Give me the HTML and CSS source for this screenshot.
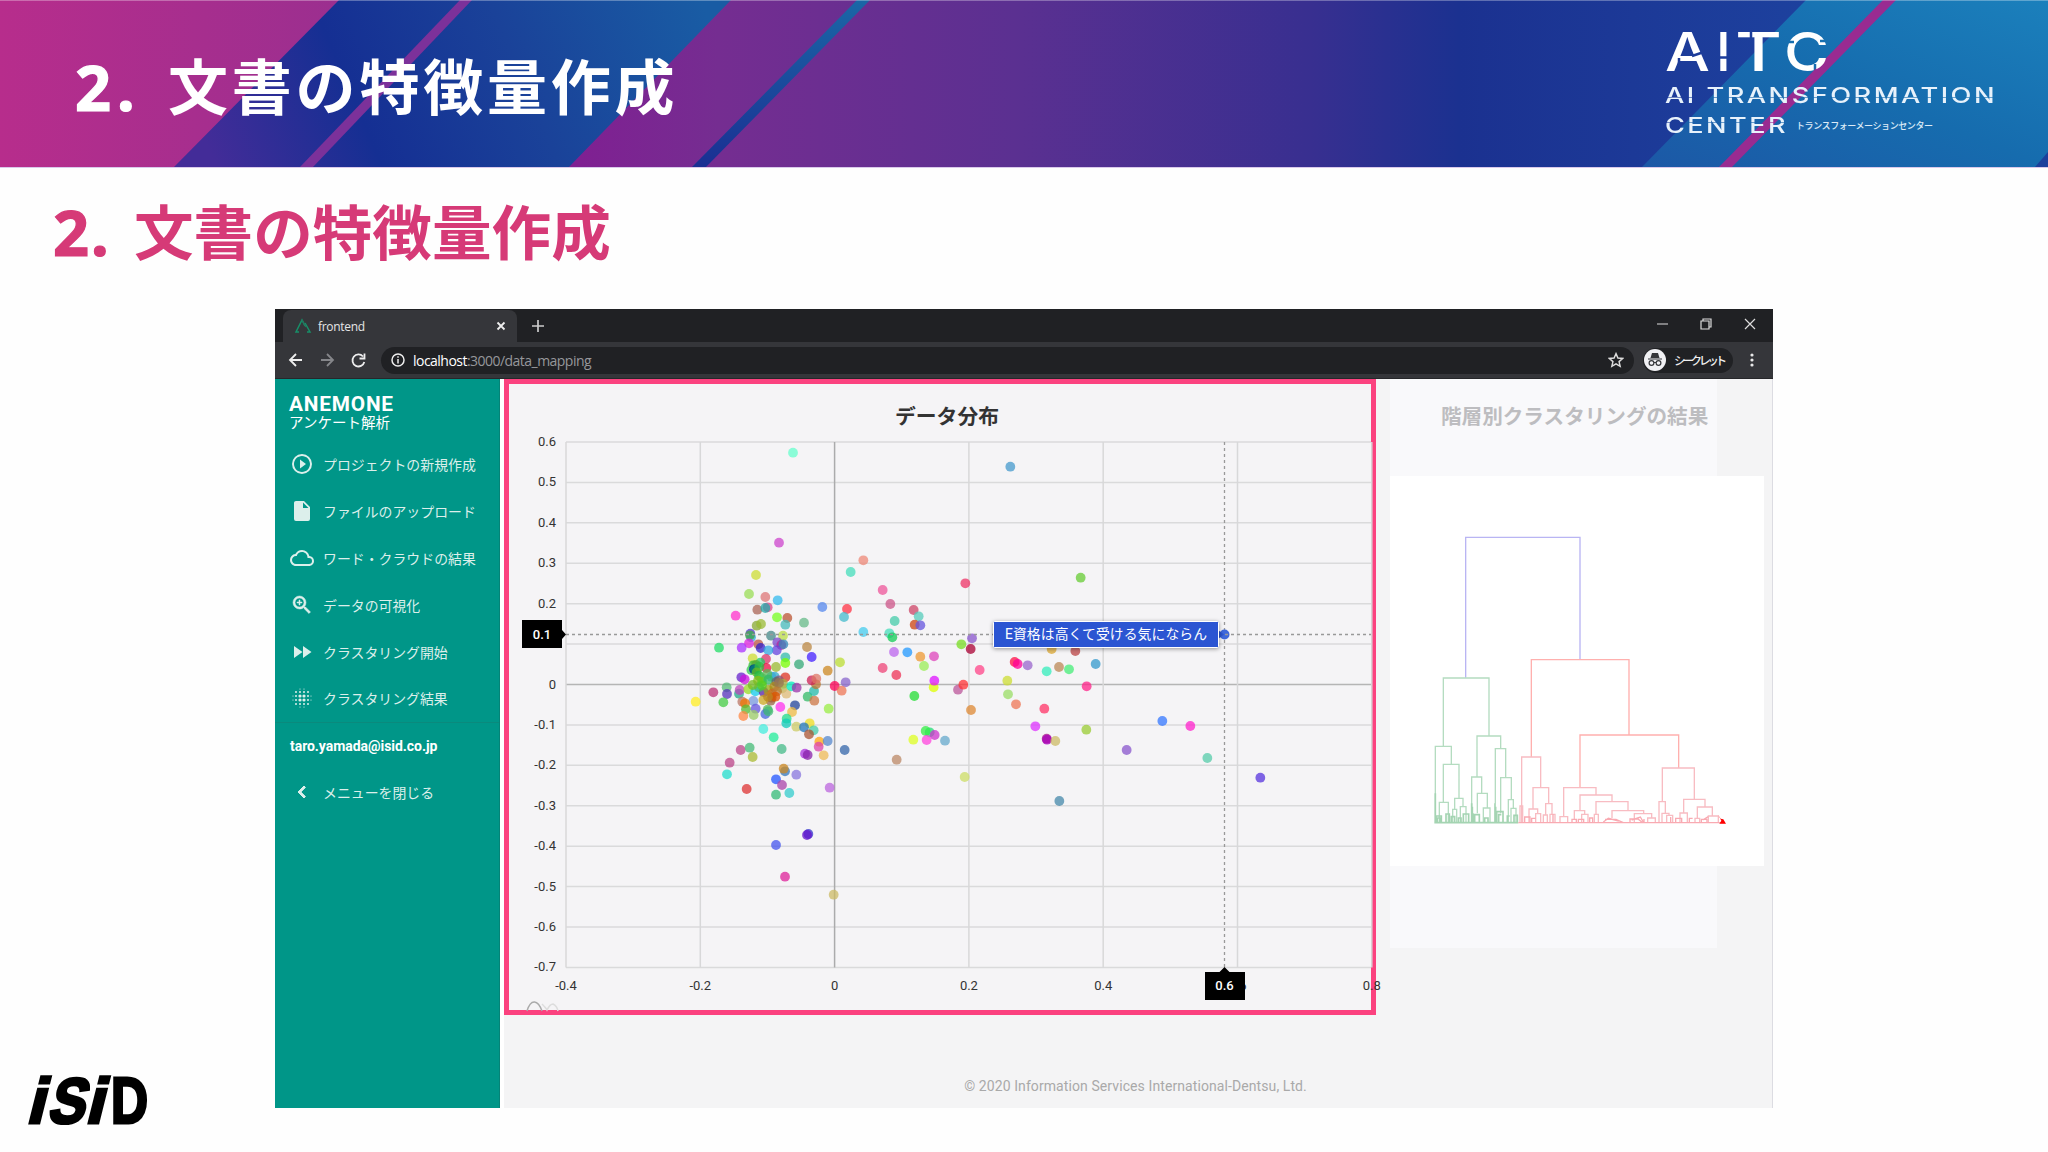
FILE: index.html
```html
<!DOCTYPE html>
<html lang="ja">
<head>
<meta charset="utf-8">
<title>2. 文書の特徴量作成</title>
<link rel="stylesheet" href="styles.css">
</head>
<body>
<header class="banner">
  <svg class="banner-art" viewBox="0 0 2048 167" preserveAspectRatio="none">
    <defs>
      <linearGradient id="pink"><stop offset="0" stop-color="#b72d8c"/><stop offset="1" stop-color="#962f90"/></linearGradient>
      <linearGradient id="blue" gradientUnits="userSpaceOnUse" x1="230" y1="200" x2="700" y2="0"><stop offset="0" stop-color="#432c98"/><stop offset=".3" stop-color="#152f93"/><stop offset=".62" stop-color="#1a4299"/><stop offset="1" stop-color="#195ca4"/></linearGradient>
      <linearGradient id="violet" gradientUnits="userSpaceOnUse" x1="569" y1="0" x2="1806" y2="0"><stop offset="0" stop-color="#801f92"/><stop offset=".12" stop-color="#752d91"/><stop offset=".36" stop-color="#5b3091"/><stop offset=".6" stop-color="#382f90"/><stop offset=".72" stop-color="#1b3190"/><stop offset="1" stop-color="#1d419e"/></linearGradient>
      <linearGradient id="sky" x1="0" y1="1" x2="1" y2="0"><stop offset="0" stop-color="#1c58a6"/><stop offset=".5" stop-color="#166cae"/><stop offset="1" stop-color="#1b80bc"/></linearGradient>
      <linearGradient id="teal" x1="0" y1="1" x2="0" y2="0"><stop offset="0" stop-color="#1a2f93"/><stop offset="1" stop-color="#1a67a6"/></linearGradient>
    </defs>
    <rect width="400" height="167" fill="url(#pink)"/>
    <path d="M339 0H740L580 167H174Z" fill="url(#blue)"/>
    <path d="M460 0H472L313 167H300Z" fill="#7c319a"/>
    <path d="M731 0H1810V167H569Z" fill="url(#violet)"/>
    <path d="M857 0H870L706 167H692Z" fill="url(#teal)"/>
    <path d="M1806 0H2048V167H1642Z" fill="url(#sky)"/>
    <path d="M1883 0H1896L1732 167H1719Z" fill="#992b91"/>
    <path d="M2048 152V167H2035Z" fill="#1c409c"/>
    <path d="M0 .5H2048" stroke="#fff" stroke-opacity=".3"/>
  </svg>
  <h1><span class="num">2.</span><span>文書の特徴量作成</span></h1>
  <svg class="brand" width="350" height="120" viewBox="1660 25 350 120">
    <defs>
      <mask id="cuts" maskUnits="userSpaceOnUse" x="1650" y="20" width="370" height="70"><rect x="1650" y="20" width="370" height="70" fill="#fff"/>
        <path d="M1692 56L1704 52M1679 66V58M1718 57.500H1730M1751 39V30M1784 42H1794M1820 41H1830M1815 73V64" stroke="#000" stroke-width="2.500"/></mask>
      <mask id="fineCuts" maskUnits="userSpaceOnUse" x="1650" y="80" width="370" height="70"><rect x="1650" y="80" width="370" height="70" fill="#fff"/>
        <path d="M1660 97.500H2000M1660 122.500H1790" stroke="#000" stroke-width="1" stroke-opacity=".6"/></mask>
    </defs>
    <g class="brand-big" mask="url(#cuts)">
      <text x="1665" y="71" textLength="45" lengthAdjust="spacingAndGlyphs">A</text>
      <text x="1716" y="71">I</text>
      <text x="1735" y="71" textLength="47" lengthAdjust="spacingAndGlyphs">T</text>
      <text x="1784" y="71" textLength="45" lengthAdjust="spacingAndGlyphs">C</text>
    </g>
    <g mask="url(#fineCuts)">
      <text class="brand-sub" x="1665" y="103" textLength="332" lengthAdjust="spacingAndGlyphs">AI TRANSFORMATION</text>
      <text class="brand-sub" x="1665" y="133" textLength="123" lengthAdjust="spacingAndGlyphs">CENTER</text>
    </g>
    <text class="brand-kana" x="1796" y="129" textLength="137">トランスフォーメーションセンター</text>
  </svg>
</header>
<h2><span class="num">2.</span><span>文書の特徴量作成</span></h2>

<main class="window">
  <div class="tabs">
    <div class="tab">
      <svg width="18" height="16" viewBox="0 0 18 16" fill="none" stroke-width="1.500"><path d="M5 14H2L8 2L11 8" stroke="#178f68"/><path d="M11 5L16 14H13" stroke="#178f68"/><path d="M8 2L12 9" stroke="#24755e"/></svg>
      <span>frontend</span>
      <svg class="tab-close" width="10" height="10" viewBox="0 0 10 10" stroke="#eee" stroke-width="1.800"><path d="M1.500 1.500l7 7M8.500 1.500l-7 7"/></svg>
    </div>
    <svg class="plus" width="14" height="14" viewBox="0 0 14 14" stroke="#ccc" stroke-width="1.700"><path d="M7 1v12M1 7h12"/></svg>
    <svg class="controls" width="110" height="20" viewBox="0 0 110 20" fill="none" stroke="#ddd" stroke-width="1.200"><path d="M5 10H16M93 5l10 10M103 5l-10 10"/><path d="M49 7h8v8h-8zM51 7V5h8v8h-2"/></svg>
  </div>
  <div class="toolbar">
    <svg width="92" height="24" viewBox="0 0 92 24" fill="none" stroke-width="1.800"><path d="M22 12H10M16 6l-6 6l6 6" stroke="#eee"/><path d="M41 12h12M47 6l6 6l-6 6" stroke="#85868a"/><path d="M83 8.500A6 6 0 1 0 84.300 14M84.500 5.500V10.500H79.500" stroke="#eee"/></svg>
    <div class="omnibox">
      <svg width="16" height="16" viewBox="0 0 16 16" fill="none" stroke="#eee" stroke-width="1.500"><circle cx="8" cy="8" r="6"/><path d="M8 7v4.500M8 4.300v1.500"/></svg>
      <span class="url"><b>localhost</b>:3000/data_mapping</span>
      <svg class="star" width="16" height="16" viewBox="0 0 24 24" fill="none" stroke="#ddd" stroke-width="2.200"><path d="M12 2.500l2.900 6.500 7 .7-5.300 4.700 1.600 7L12 17.700 5.800 21.400l1.600-7L2.100 9.700l7-.7z"/></svg>
    </div>
    <div class="incognito">
      <svg width="22" height="22" viewBox="0 0 22 22"><circle cx="11" cy="11" r="11" fill="#f1f1f4"/><path d="M4 9.500h14v1H4zM6.500 9l1.500-5h6l1.500 5z" fill="#35363a"/><g fill="none" stroke="#35363a" stroke-width="1.200"><circle cx="7.500" cy="14" r="2.400"/><circle cx="14.500" cy="14" r="2.400"/><path d="M10 13.500h2"/></g></svg>
      <span>シークレット</span>
    </div>
    <svg class="dots" width="4" height="16" viewBox="0 0 4 16" fill="#e8e8e8"><circle cx="2" cy="3" r="1.600"/><circle cx="2" cy="8" r="1.600"/><circle cx="2" cy="13" r="1.600"/></svg>
  </div>
  <div class="page">
    <nav class="sidebar">
      <div class="app"><b>ANEMONE</b><span>アンケート解析</span></div>
      <ul>
        <li><svg viewBox="0 0 24 24"><path d="M12 20c-4.410 0-8-3.590-8-8s3.590-8 8-8 8 3.590 8 8-3.590 8-8 8m0-18A10 10 0 1 0 12 22 10 10 0 0 0 12 2m-2 14.500l6-4.500-6-4.500z"/></svg>プロジェクトの新規作成</li>
        <li><svg viewBox="0 0 24 24"><path d="M13 9V3.500L18.500 9M6 2c-1.110 0-2 .89-2 2v16a2 2 0 0 0 2 2h12a2 2 0 0 0 2-2V8l-6-6z"/></svg>ファイルのアップロード</li>
        <li><svg viewBox="0 0 24 24"><path d="M19.350 10.040A7.490 7.490 0 0 0 12 4C9.110 4 6.600 5.640 5.350 8.040A5.990 5.990 0 0 0 0 14c0 3.310 2.690 6 6 6h13c2.760 0 5-2.240 5-5 0-2.640-2.050-4.780-4.650-4.960zM19 18H6c-2.210 0-4-1.790-4-4s1.790-4 4-4h.71A5.500 5.500 0 0 1 12 6c3.040 0 5.500 2.460 5.500 5.500v.5H19a3 3 0 0 1 0 6z"/></svg>ワード・クラウドの結果</li>
        <li><svg viewBox="0 0 24 24"><path d="M15.500 14h-.79l-.28-.27A6.470 6.470 0 0 0 16 9.500 6.500 6.500 0 1 0 9.500 16c1.610 0 3.090-.59 4.230-1.570l.27.28v.79l5 4.990L20.490 19zm-6 0C7.010 14 5 11.990 5 9.500S7.010 5 9.500 5 14 7.010 14 9.500 11.990 14 9.500 14zM12 10h-2v2H9v-2H7V9h2V7h1v2h2z" stroke="#dcefeb" stroke-width=".5"/></svg>データの可視化</li>
        <li><svg viewBox="0 0 24 24"><path d="M4 18l8.500-6L4 6zm9-12v12l8.500-6z"/></svg>クラスタリング開始</li>
        <li><svg viewBox="0 0 24 24"><g fill="none" stroke="#dcefeb" stroke-linecap="round"><path d="M10 3h4.100M10 21h4.100M3 10v4.100M21 10v4.100" stroke-width="1.200" stroke-dasharray="0 4"/><path d="M6 6h12.100M6 18h12.100M6 10h.1M6 14h.1M18 10h.1M18 14h.1" stroke-width="2" stroke-dasharray="0 4"/><path d="M10 10h4.100M10 14h4.100" stroke-width="3.200" stroke-dasharray="0 4"/></g></svg>クラスタリング結果</li>
      </ul>
      <p class="mail">taro.yamada@isid.co.jp</p>
      <ul class="closer"><li><svg viewBox="0 0 24 24"><path d="M15.410 7.410L14 6l-6 6 6 6 1.410-1.410L10.830 12z" stroke="#dcefeb"/></svg>メニューを閉じる</li></ul>
    </nav>
    <div class="content">
      <div class="panels">
        <section class="plot">
          <svg class="scatter" width="880" height="636" viewBox="504 379 880 636">
            <text class="title" x="947" y="424" text-anchor="middle">データ分布</text>
            <g id="grid"></g>
            <g id="points"></g>
            <path d="M566 634.500H1218M1224.500 442V967" class="crosshair"/>
            <circle cx="1224.500" cy="634.500" r="5" fill="#3e68db"/>
            <path d="M1218 630L1224 634.500L1218 639Z" fill="#2b55d0"/>
            <path d="M1225 634.500H1371" class="crosshair"/>
            <rect x="993.500" y="621.500" width="225" height="26" rx="1" fill="#2b55d2" stroke="#fff" class="tip"/>
            <text class="tip-text" x="1005" y="639" textLength="202">E資格は高くて受ける気にならん</text>
            <path d="M522 620H562V630L566 634.500L562 639V648H522Z"/>
            <path d="M1205 972H1219.500L1224.500 967L1229.500 972H1245V1000H1205Z"/>
            <text class="label" x="542" y="638.500">0.1</text>
            <text class="label" x="1224.500" y="990">0.6</text>
            <path d="M527 1011C531 998 538 1000 542 1011" fill="none" stroke="#aaa" stroke-width="1.500"/><path d="M542 1004q4 4 5 6q3-6 6-6q4 2 5 7" fill="none" stroke="#ddd" stroke-width="1.500"/>
          </svg>
        </section>
        <section class="tree">
          <h3>階層別クラスタリングの結果</h3>
          <svg width="374" height="390" viewBox="1390 476 374 390">
            <rect x="1390" y="476" width="374" height="390" fill="#fff"/>
            <g transform="translate(1400 500) scale(.33333)" fill="none" stroke-width="4">
              <path d="M197 533V112H540V477" stroke="#b9b5f3"/>
              <g stroke="#b4dcc0">
                <path d="M130 739V534H267V707M106 966V739H154V793M130 907V793H177V895M118 966V907H145V966M164 930V895H189V920M158 966V928H170V966M181 966V920H198V966M231 831V708H302V745M215 966V831H245V880M232 940V880H262V924M250 966V924H270V966M286 966V746H317V833M302 940V833H334V899M325 966V899H340V925M333 966V925H348V966M284 966V910"/>
                <path d="M103 968H355M108 966V948H124V966M138 966V942H148V966M190 966V942H206V966M224 966V944H238V966M215 966V910M290 966V935H309V966M296 966V944H304M322 966V948H329M342 966V946H352V966M112 966V954H120V966M154 966V950H164V966M175 966V954H183V966M254 966V954H264V966M106 966V880M217 966V920M287 966V920M219 966V940" stroke="#a4d4b2" stroke-width="5"/>
              </g>
              <g stroke="#ffb0ae"><path d="M394 771V479H687V705M540 863V705H836V804"/></g>
              <g stroke="#f8bcc2">
                <path d="M365 966V771H422V863M399 927V863H446V911M387 966V927H413V941M407 966V941H422V966M437 945V911H456V943M430 966V945H442V966M450 966V943H465V966M491 950V863H588V885M540 932V885H636V905M588 943V905H684V932M636 954V932H731V941M703 966V941H755V954M743 966V954H766V966M523 960V932H554V943M545 966V943H564V966M583 966V943H595V966M480 966V950H503V966M787 905V804H883V898M777 966V905H796V940M786 966V940H807V946M800 966V946H818V966M851 939V898H915V921M840 966V939H862V966M892 955V921H937V948M885 966V955H899V966M925 966V948H955V966M360 966V918H368V966"/>
                <path d="M355 968H975M374 966V951H390V966M395 966V955H407M459 966V943M516 966V958H529V966M535 966V958H551V966M569 966V954H578V966M615 958H648L670 968M690 966V957H714L728 968M732 966V957M827 966V955H845V966M868 966V955H878M904 966V958H921V966M812 966V951M610 966L625 955L656 963M695 960L721 951L730 966M908 960L925 950" stroke="#f9aab2"/>
              </g>
              <path d="M955 945L962 956L970 958L978 971H958L964 962Z" fill="#f00"/>
            </g>
          </svg>
        </section>
      </div>
      <footer>© 2020 Information Services International-Dentsu, Ltd.</footer>
    </div>
  </div>
</main>
<svg class="isid" width="150" height="76" viewBox="15 1060 150 76">
  <g transform="translate(25.500 1123) skewX(-14)"><text class="logo" x="0" y="0" textLength="18" lengthAdjust="spacingAndGlyphs">i</text><text class="logo" x="21" y="0" textLength="37" lengthAdjust="spacingAndGlyphs">S</text><text class="logo" x="59" y="0" textLength="18" lengthAdjust="spacingAndGlyphs">i</text></g>
  <text class="logo" x="111" y="1123" textLength="37" lengthAdjust="spacingAndGlyphs">D</text>
</svg>
<script src="chart.js"></script>
</body>
</html>
```
FILE: styles.css
```css
* { box-sizing: border-box; }
body {
  margin: 0; width: 2048px; height: 1152px; overflow: hidden; position: relative;
  background: #fefefe; font-family: Roboto, "Noto Sans CJK JP", sans-serif;
  display: flex; flex-direction: column; align-items: flex-start;
}
.banner { position: relative; width: 2048px; height: 168px; flex: none; display: flex; align-items: center; justify-content: space-between; padding: 0 38px 0 75px; border-bottom: 1px solid #d9c9ea; }
.banner-art { position: absolute; inset: 0; width: 2048px; height: 167px; }
h1, h2 { margin: 0; font-family: "Noto Sans", "Noto Sans CJK JP", sans-serif; font-weight: 700; line-height: 80px; white-space: nowrap; display: flex; }
h1 { position: relative; color: #fff; font-size: 60px; letter-spacing: 3.8px; padding-top: 6px; }
h1 .num { width: 93px; font-size: 63px; letter-spacing: 6px; -webkit-text-stroke: 1.2px; }
h2 { color: #d63a77; font-size: 59.600px; margin: 24px 0 0 53px; height: 117px; }
h2 .num { width: 81px; font-size: 63px; letter-spacing: 2px; -webkit-text-stroke: 1.2px; }
.brand { position: relative; margin-top: 3px; fill: #fff; font-family: Inter, sans-serif; overflow: visible; }
.brand-big { font-size: 54px; font-weight: 500; }
.brand-sub { font-size: 22px; font-weight: 500; letter-spacing: 2px; fill: #e8f2fb; }
.brand-kana { font: 500 9px "Noto Sans CJK JP", sans-serif; fill: #dcebf7; }

.window { margin-left: 275px; width: 1498px; height: 799px; flex: none; display: flex; flex-direction: column; background: #f4f4f5; }
.tabs { height: 33px; background: #202124; display: flex; align-items: center; padding-left: 8px; color: #e6e6e6; }
.tab { width: 234px; height: 32px; align-self: flex-end; background: #35363a; border-radius: 8px 8px 0 0; display: flex; align-items: center; padding: 0 11px; font: 12px "Open Sans", sans-serif; letter-spacing: -.3px; }
.tab span { margin-left: 6px; }
.tab-close { margin-left: auto; }
.plus { margin-left: 14px; }
.controls { margin-left: auto; margin-right: 11px; margin-bottom: 4px; }
.toolbar { height: 37px; background: #35363a; display: flex; align-items: center; padding: 0 19px 0 5px; border-bottom: 1px solid #26272a; }
.omnibox { margin-left: 9px; width: 1253px; height: 27px; border-radius: 14px; background: #202124; display: flex; align-items: center; padding: 0 10px 0 9px; }
.url { margin-left: 7px; font: 14px "Open Sans", sans-serif; letter-spacing: -.53px; color: #96979b; }
.url b { font-weight: 400; color: #fff; }
.star { margin-left: auto; }
.incognito { margin-left: 9px; width: 90px; height: 25px; border-radius: 13px; background: #202124; color: #eee; display: flex; align-items: center; padding-left: 1px; font: 500 11.500px "Noto Sans CJK JP", sans-serif; white-space: nowrap; }
.incognito span { margin-left: 8px; letter-spacing: -3.2px; }
.dots { margin-left: auto; }

.page { flex: 1; display: flex; min-height: 0; border-right: 1px solid #dcdce2; }
.sidebar { width: 225px; background: #009688; color: #dcefeb; border-right: 1px solid #058377; }
.app { height: 62px; padding: 14px 0 0 14px; display: flex; flex-direction: column; color: #fff; }
.app b { font-size: 20.800px; line-height: 22px; letter-spacing: .8px; }
.app span { font-size: 14.500px; line-height: 17px; }
.sidebar ul { margin: 0; padding: 0; list-style: none; }
.sidebar li { height: 46.800px; padding-left: 15px; display: flex; align-items: center; font-size: 13.900px; white-space: nowrap; }
.sidebar li svg { width: 24px; height: 24px; margin-right: 9px; fill: #dcefeb; }
.mail { margin: 0; height: 47px; line-height: 47px; padding-left: 15px; border-top: 1px solid #0a8a7d; color: #fff; font-size: 14px; font-weight: 700; letter-spacing: -.05px; }

.content { flex: 1; display: flex; flex-direction: column; border-left: 4px solid #fff; }
.panels { display: flex; height: 642px; }
.plot { width: 872px; height: 636px; border: 5px solid #fb427f; background: #f5f4f6; flex: none; }
.scatter { display: block; margin: -5px; overflow: visible; }
.scatter text { font-size: 13px; fill: #333; }
.scatter .title { font-size: 20.800px; font-weight: 700; fill: #333; }
.scatter .label { fill: #fff; font-weight: 500; text-anchor: middle; }
.scatter .tip-text { fill: #fff; font-size: 13.800px; }
.tip { filter: drop-shadow(0 1px 2px #0006); }
.crosshair { stroke: #999; stroke-width: 1.300; stroke-dasharray: 3 3; fill: none; }
.tree { width: 327px; height: 569px; margin-left: 14px; background: #f9f9fb; }
.tree h3 { margin: 0; height: 97px; padding: 23px 0 0 51px; font-size: 20.600px; line-height: 30px; color: #bdbdc0; white-space: nowrap; }
.tree svg { display: block; }
footer { padding-top: 57px; width: 1263px; text-align: center; font-size: 14px; letter-spacing: .09px; color: #a9a9a9; }
.isid { position: absolute; left: 15px; top: 1060px; }
.logo { font: 700 64px "Liberation Sans", Arial, sans-serif; stroke: #000; stroke-width: 3; }
```
FILE: chart.js
```js
const NS = "http://www.w3.org/2000/svg";
function add(parent, tag, attrs, text) {
  const el = document.createElementNS(NS, tag);
  for (const k in attrs) el.setAttribute(k, attrs[k]);
  if (text) el.textContent = text;
  parent.appendChild(el);
}
const grid = document.getElementById("grid");
for (let i = 0; i < 14; i++) {
  const v = (6 - i) / 10, y = 442 + i * 40.42;
  add(grid, "path", {d: `M566 ${y}H1371`, stroke: v === 0 ? "#b5b5b5" : "#dadadb", "stroke-width": 1.5});
  add(grid, "text", {x: 556, y: y + 4, "text-anchor": "end"}, String(v));
}
for (let i = 0; i < 7; i++) {
  const v = (i - 2) * 2 / 10, x = 566 + i * 134.3;
  add(grid, "path", {d: `M${x} 442V967.5`, stroke: v === 0 ? "#ababac" : "#d8d8d9", "stroke-width": 1.5});
  add(grid, "text", {x, y: 989.5, "text-anchor": "middle"}, String(v));
}
// Each group: plot origin, then x y colour triples at a third of a pixel.
const groups = [
[670, 430, `369 68 6fc;327 338 c4c;258 435 cd3;237 492 9d5;286 501 d77;323 511 3be;262 539 a65;293 532 d48;286 534 2aa;197 557 f3c;457 531 58e;531 537 f34;522 561 4bc;580 391 e87;542 426 4db;321 562 7f2;352 564 b53;346 584 4bb;402 578 6b8;260 587 8a3;273 582 9b3;580 606 4ce;241 611 53c;243 622 3ad;240 616 4a4;303 617 488;339 617 bd4;322 637 74c;334 645 b29;340 643 38b;320 661 64d;265 643 b54;237 640 d2d;215 653 a3f;272 654 32c;295 661 3ad;147 653 2d6;411 651 b84;425 681 42f;510 697 bd3;387 703 3a7;346 682 3ba;346 699 7f0;318 711 9b3;473 722 c82`],
[670, 640, `248 55 cd3;288 57 d36;271 68 2c6;250 76 3b3;258 75 5a3;244 90 3c5;289 84 e14;252 88 019;255 88 087;268 80 3b4;260 97 6b2;346 112 d32;214 112 62c;224 118 c1d;267 107 2b4;276 115 4c5;304 110 4ae;314 110 3ac;327 121 857;292 102 5b5;264 122 8b1;276 126 6c2;295 119 3b6;319 126 666;339 131 aa4;130 157 b37;170 142 5b7;171 162 53b;160 187 4c4;207 161 2a8;209 150 b4b;235 148 9d2;256 154 1ce;281 156 52a;267 142 4b6;295 150 9a1;248 135 7b2;276 136 5c2;313 140 a81;337 145 ab5;349 161 db7;327 129 975;364 139 0eb;380 143 93a;306 161 c62;305 173 b51;302 182 964;280 180 ca2;321 154 b73;316 170 d50;294 170 b82;250 183 79d;217 185 b76;225 190 e70;228 208 5b3;257 206 65d;251 225 9c6;220 228 f84;293 209 5b5;286 222 46d;295 214 4b7;331 201 f3e;375 196 249;77 185 fe2;413 170 3b6;433 182 c74;432 153 2ba;438 133 b73;425 121 c25;439 116 d76;494 138 f05;527 127 86c;515 152 e75;476 206 9e4;366 216 eb4;350 236 2d8;349 250 1cb;379 260 cc6;419 250 ed2;402 262 27b;431 271 4ca;417 283 a53;280 267 4ed;311 292 2e9;335 327 4b8;448 305 fa1;446 320 d4a;473 303 58c;524 330 36a;461 346 eb5;405 341 a3d;413 345 82a;212 330 b48;239 323 4b7;248 351 ab3;179 368 b48;171 403 2dc;345 394 37b;341 386 c82;318 418 25f;336 435 a4a;379 404 87d;358 459 3cc;318 464 3b7;230 447 d33;479 443 b6d;415 582 33c;411 585 61c;318 615 45e;345 710 d29;491 764 cb6`],
[860, 430, `451 110 49c;316 460 e36;662 443 6c3;68 480 e59;91 522 c58;161 540 c46;176 559 5cb;104 573 4ca;164 584 c41;181 586 65d;88 610 4db;97 622 1c5;336 625 85c;304 643 7d2;332 657 a03`],
[860, 640, `102 36 b6e;142 37 29f;181 50 e93;192 78 9e5;222 49 d4b;68 84 e47;109 105 e35;221 142 df0;223 122 d1f;294 149 b59;310 134 f33;359 90 f48;163 168 2d3;333 210 d83;464 66 f14;473 72 f09;503 76 96c;442 122 cd3;560 94 3eb;597 81 b85;627 88 4e7;707 72 39c;646 33 b44;575 27 da3;680 139 f28;444 163 9d6;468 193 e75;553 206 f36;526 259 d3f;560 296 a18;561 299 a0b;586 303 cb6;679 269 9c3;209 277 2d7;197 273 3e4;224 285 c3c;160 299 df2;200 300 f4d;255 302 6ac;110 359 b86;314 411 cd6;598 483 48a;907 243 37f;991 258 f2c;800 330 85c;1042 354 5ca;1201 413 53d`]
];
const points = document.getElementById("points");
for (const [ox, oy, list] of groups)
  for (const item of list.split(";")) {
    const [x, y, c] = item.split(" ");
    add(points, "circle", {cx: ox + x / 3, cy: oy + y / 3, r: 4.9, fill: "#" + c, "fill-opacity": .75});
  }
```
